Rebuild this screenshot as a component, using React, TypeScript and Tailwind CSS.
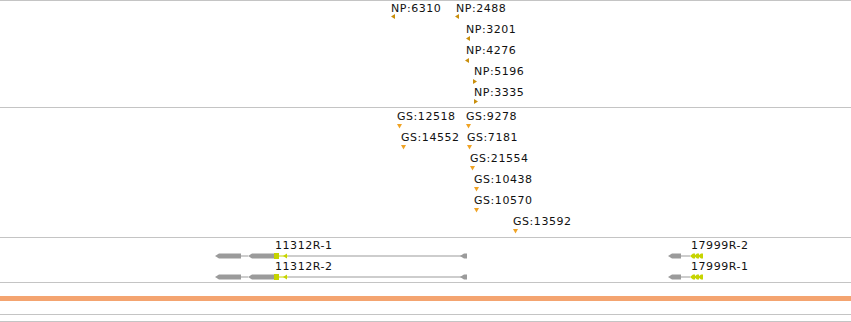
import React from 'react';

type Tag = { label: string; x: number; cap: number; tx: number; ty: number; dir: 'left' | 'right' | 'down' };

const NP_TAGS: Tag[] = [
  { label: 'NP:6310', x: 391, cap: 4, tx: 391, ty: 14, dir: 'left' },
  { label: 'NP:2488', x: 456, cap: 4, tx: 455, ty: 14, dir: 'left' },
  { label: 'NP:3201', x: 466, cap: 25, tx: 466, ty: 36, dir: 'left' },
  { label: 'NP:4276', x: 466, cap: 46, tx: 465, ty: 58, dir: 'left' },
  { label: 'NP:5196', x: 474, cap: 67, tx: 473, ty: 79, dir: 'right' },
  { label: 'NP:3335', x: 474, cap: 88, tx: 474, ty: 99, dir: 'right' },
];

const GS_TAGS: Tag[] = [
  { label: 'GS:12518', x: 397, cap: 112, tx: 397, ty: 124, dir: 'down' },
  { label: 'GS:9278', x: 466, cap: 112, tx: 466, ty: 124, dir: 'down' },
  { label: 'GS:14552', x: 401, cap: 133, tx: 401, ty: 145, dir: 'down' },
  { label: 'GS:7181', x: 467, cap: 133, tx: 467, ty: 145, dir: 'down' },
  { label: 'GS:21554', x: 470, cap: 154, tx: 470, ty: 166, dir: 'down' },
  { label: 'GS:10438', x: 474, cap: 175, tx: 474, ty: 187, dir: 'down' },
  { label: 'GS:10570', x: 474, cap: 196, tx: 474, ty: 208, dir: 'down' },
  { label: 'GS:13592', x: 513, cap: 217, tx: 513, ty: 229, dir: 'down' },
];

const GENE_LABELS = [
  { label: '11312R-1', x: 275, cap: 241 },
  { label: '11312R-2', x: 275, cap: 262 },
  { label: '17999R-2', x: 691, cap: 241 },
  { label: '17999R-1', x: 691, cap: 262 },
];

const GRAY = '#9b9b9b';
const LIME = '#c6d400';

// label placed by its cap top; track top is where the track's content box begins
const Label = ({ text, x, cap, top }: { text: string; x: number; cap: number; top: number }) => (
  <span
    className="absolute whitespace-nowrap text-[11px] leading-[13px] tracking-[0.55px] text-[#111]"
    style={{ left: x, top: cap - 2 - top }}
  >
    {text}
  </span>
);

const Marker = ({ tag, top, color }: { tag: Tag; top: number; color: string }) => {
  const pts =
    tag.dir === 'left' ? '0,2.5 4,0 4,5' : tag.dir === 'right' ? '0,0 4,2.5 0,5' : '0,0 5,0 2.5,4.5';
  const w = tag.dir === 'down' ? 5 : 4;
  const h = 5;
  return (
    <svg className="absolute" width={w} height={h} style={{ left: tag.tx, top: tag.ty - top }}>
      <polygon points={pts} fill={color} />
    </svg>
  );
};

const Arrowed = ({ x1, x2 }: { x1: number; x2: number }) => (
  <polygon points={`${x1},4 ${x1 + 4},1.5 ${x2},1.5 ${x2},6.5 ${x1 + 4},6.5`} fill={GRAY} />
);

const GeneRow = ({ y }: { y: number }) => (
  <svg className="absolute left-0" width={851} height={8} style={{ top: y - 4 - 238 }}>
    {/* 11312R */}
    <Arrowed x1={215} x2={241} />
    <line x1={241} y1={4} x2={248} y2={4} stroke={GRAY} strokeWidth={1} />
    <Arrowed x1={248} x2={274} />
    <rect x={274} y={1} width={5} height={6} fill={LIME} />
    <line x1={279} y1={4} x2={288} y2={4} stroke={LIME} strokeWidth={1} />
    <polygon points="283,4 287,1.5 287,6.5" fill={LIME} />
    <line x1={288} y1={4} x2={462} y2={4} stroke={GRAY} strokeWidth={1} />
    <polygon points="460,4 464,1.5 467,1.5 467,6.5 464,6.5" fill={GRAY} />
    {/* 17999R */}
    <Arrowed x1={668} x2={681} />
    <line x1={681} y1={4} x2={690} y2={4} stroke={GRAY} strokeWidth={1} />
    {[690, 694, 698].map(x => (
      <polygon key={x} points={`${x},4 ${x + 3},1.5 ${x + 5},1.5 ${x + 5},6.5 ${x + 3},6.5`} fill={LIME} />
    ))}
  </svg>
);

export default function App() {
  return (
    <div className="flex flex-col w-[851px] h-[322px] bg-white overflow-hidden" style={{ fontFamily: '"DejaVu Sans", sans-serif' }}>
      {/* NP track */}
      <div className="relative h-[108px] border-y border-[#c4c4c4]">
        {NP_TAGS.map(t => (
          <React.Fragment key={t.label}>
            <Label text={t.label} x={t.x} cap={t.cap} top={1} />
            <Marker tag={t} top={1} color="#c98f0c" />
          </React.Fragment>
        ))}
      </div>

      {/* GS track */}
      <div className="relative h-[130px] border-b border-[#c4c4c4]">
        {GS_TAGS.map(t => (
          <React.Fragment key={t.label}>
            <Label text={t.label} x={t.x} cap={t.cap} top={108} />
            <Marker tag={t} top={108} color="#f0a324" />
          </React.Fragment>
        ))}
      </div>

      {/* gene models */}
      <div className="relative h-[45px] border-b border-[#c4c4c4]">
        {GENE_LABELS.map(g => (
          <Label key={g.label} text={g.label} x={g.x} cap={g.cap} top={238} />
        ))}
        <GeneRow y={256} />
        <GeneRow y={277} />
      </div>

      <div className="h-[13px]" />
      <div className="h-[5px] bg-[#f4a470]" />
      <div className="h-[13px]" />
      <div className="h-px bg-[#c4c4c4]" />
      <div className="h-[6px]" />
      <div className="h-px bg-[#c4c4c4]" />
    </div>
  );
}
